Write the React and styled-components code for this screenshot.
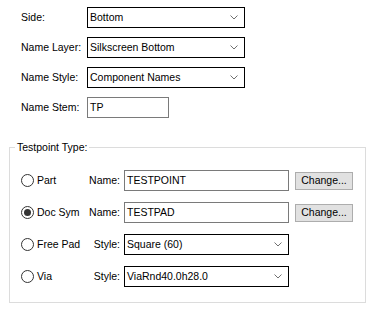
import React from "react";
import styled, { createGlobalStyle } from "styled-components";

const Global = createGlobalStyle`
  html, body { margin: 0; padding: 0; background: #ffffff; }
  body { font-family: "Liberation Sans", Arial, sans-serif; font-size: 10.5px; color: #000; }
`;

const Page = styled.div`
  width: 373px;
  height: 312px;
  box-sizing: border-box;
  padding-top: 7px;
  overflow: hidden;
`;

const TopForm = styled.div`
  display: grid;
  grid-template-columns: 66px auto;
  grid-auto-rows: 21px;
  row-gap: 9px;
  padding-left: 21px;
  align-items: center;
`;

const Label = styled.span`
  line-height: 13px;
  white-space: nowrap;
`;

const Combo = styled.div`
  box-sizing: border-box;
  width: ${(p) => p.$w}px;
  height: 21px;
  border: 1px solid #000;
  background: #fff;
  display: flex;
  align-items: center;
  justify-content: space-between;
  padding: 0 6px 0 2px;
  line-height: 13px;
  white-space: nowrap;
`;

const Chevron = () => (
  <svg width="8" height="5" viewBox="0 0 8 5">
    <path d="M0.5 0.5 L4 4 L7.5 0.5" fill="none" stroke="#707070" strokeWidth="1" />
  </svg>
);

const TextBox = styled.div`
  box-sizing: border-box;
  width: ${(p) => p.$w}px;
  height: 21px;
  border: 1px solid #7a7a7a;
  background: #fff;
  display: flex;
  align-items: center;
  padding: 0 2px;
  line-height: 13px;
  white-space: nowrap;
`;

const Group = styled.fieldset`
  box-sizing: border-box;
  margin: 23px 0 0 9px;
  width: 357px;
  border: 1px solid #dcdcdc;
  padding: 0;
  min-inline-size: 0;
`;

const Legend = styled.legend`
  margin-left: 5px;
  padding: 0 2px;
  line-height: 13px;
  font-size: 10.5px;
`;

const GroupGrid = styled.div`
  display: grid;
  grid-template-columns: 66px 34px 168px 64px;
  grid-auto-rows: 21px;
  row-gap: 11px;
  column-gap: 0;
  padding: 16px 0 15px 11px;
  align-items: center;
`;

const RadioLabel = styled.label`
  display: flex;
  align-items: center;
  gap: 3px;
  line-height: 13px;
  white-space: nowrap;
`;

const RadioCircle = styled.span`
  box-sizing: border-box;
  width: 13px;
  height: 13px;
  border-radius: 50%;
  border: 1px solid #333;
  background: #fff;
  display: flex;
  align-items: center;
  justify-content: center;
  &::after {
    content: "";
    width: 7px;
    height: 7px;
    border-radius: 50%;
    background: ${(p) => (p.$checked ? "#333" : "transparent")};
  }
`;

const FieldLabel = styled.span`
  text-align: right;
  padding-right: 1px;
  line-height: 13px;
  white-space: nowrap;
`;

const ControlCell = styled.div`
  padding-left: 3px;
  display: flex;
  align-items: center;
`;

const Button = styled.button`
  box-sizing: border-box;
  margin-left: 6px;
  width: 58px;
  height: 18px;
  border: 1px solid #adadad;
  background: #e1e1e1;
  font-family: "Liberation Sans", Arial, sans-serif;
  font-size: 10.5px;
  color: #000;
  padding: 0;
  line-height: 13px;
  display: block;
`;

const rows = [
  { label: "Part", checked: false, field: "Name:", kind: "text", value: "TESTPOINT", button: true },
  { label: "Doc Sym", checked: true, field: "Name:", kind: "text", value: "TESTPAD", button: true },
  { label: "Free Pad", checked: false, field: "Style:", kind: "combo", value: "Square (60)" },
  { label: "Via", checked: false, field: "Style:", kind: "combo", value: "ViaRnd40.0h28.0" },
];

export default function App() {
  return (
    <>
      <Global />
      <Page>
        <TopForm>
          <Label>Side:</Label>
          <Combo $w={158}>
            <span>Bottom</span>
            <Chevron />
          </Combo>
          <Label>Name Layer:</Label>
          <Combo $w={158}>
            <span>Silkscreen Bottom</span>
            <Chevron />
          </Combo>
          <Label>Name Style:</Label>
          <Combo $w={158}>
            <span>Component Names</span>
            <Chevron />
          </Combo>
          <Label>Name Stem:</Label>
          <TextBox $w={82}>TP</TextBox>
        </TopForm>
        <Group>
          <Legend>Testpoint Type:</Legend>
          <GroupGrid>
            {rows.map((r) => (
              <React.Fragment key={r.label}>
                <RadioLabel>
                  <RadioCircle $checked={r.checked} />
                  {r.label}
                </RadioLabel>
                <FieldLabel>{r.field}</FieldLabel>
                <ControlCell>
                  {r.kind === "text" ? (
                    <TextBox $w={165}>{r.value}</TextBox>
                  ) : (
                    <Combo $w={166}>
                      <span>{r.value}</span>
                      <Chevron />
                    </Combo>
                  )}
                </ControlCell>
                <div>{r.button && <Button>Change...</Button>}</div>
              </React.Fragment>
            ))}
          </GroupGrid>
        </Group>
      </Page>
    </>
  );
}
